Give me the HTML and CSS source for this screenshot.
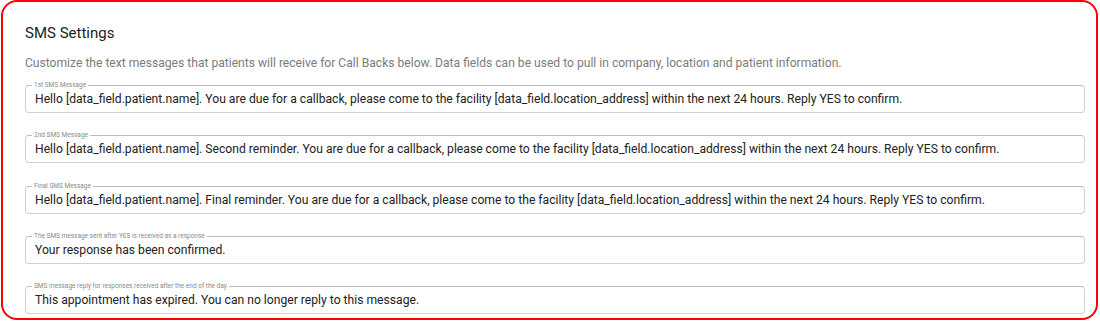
FILE: index.html
```html
<!DOCTYPE html>
<html lang="en">
<head>
  <meta charset="UTF-8" />
  <title>SMS Settings</title>
  <link rel="stylesheet" href="styles.css">
</head>
<body>
  <section class="card">
    <h2 class="card-title">SMS Settings</h2>
    <p class="card-desc">Customize the text messages that patients will receive for Call Backs below. Data fields can be used to pull in company, location and patient information.</p>

    <div class="fields">
      <fieldset class="field">
        <legend>1st SMS Message</legend>
        <div class="field-value">Hello [data_field.patient.name]. You are due for a callback, please come to the facility [data_field.location_address] within the next 24 hours. Reply YES to confirm.</div>
      </fieldset>
      <fieldset class="field">
        <legend>2nd SMS Message</legend>
        <div class="field-value">Hello [data_field.patient.name]. Second reminder. You are due for a callback, please come to the facility [data_field.location_address] within the next 24 hours. Reply YES to confirm.</div>
      </fieldset>
      <fieldset class="field">
        <legend>Final SMS Message</legend>
        <div class="field-value">Hello [data_field.patient.name]. Final reminder. You are due for a callback, please come to the facility [data_field.location_address] within the next 24 hours. Reply YES to confirm.</div>
      </fieldset>
      <fieldset class="field">
        <legend>The SMS message sent after YES is received as a response</legend>
        <div class="field-value">Your response has been confirmed.</div>
      </fieldset>
      <fieldset class="field">
        <legend>SMS message reply for responses received after the end of the day</legend>
        <div class="field-value">This appointment has expired. You can no longer reply to this message.</div>
      </fieldset>
    </div>
  </section>
</body>
</html>
```

FILE: styles.css
```css
* { box-sizing: border-box; }
body {
  margin: 0;
  font-family: Roboto, "Liberation Sans", sans-serif;
  background: #fff;
  color: #222;
}
.card {
  width: 1097px;
  height: 320px;
  margin-left: 1px;
  border: 2px solid #ff0000;
  border-radius: 16px;
  padding: 20px 11px 0 22px;
  overflow: hidden;
}
.card-title {
  margin: 0;
  font-size: 15px;
  font-weight: 400;
  line-height: 22px;
  color: #222;
}
.card-desc {
  margin: 11px 0 0;
  font-size: 12.1px;
  line-height: 16px;
  color: #7c7c7c;
}
.fields {
  display: flex;
  flex-direction: column;
  gap: 18.3px;
  margin-top: 10px;
}
.field {
  margin: 0;
  padding: 0 9px 4px;
  border: 1px solid #d2d2d2;
  border-top-color: #bdbdbd;
  border-radius: 4px;
  min-inline-size: 0;
}
.field legend {
  margin-left: -3px;
  padding: 0 2px;
  font-size: 6.5px;
  line-height: 9px;
  color: #8a8a8a;
}
.field-value {
  font-size: 12.15px;
  line-height: 18px;
  color: #222;
  white-space: nowrap;
}
```
